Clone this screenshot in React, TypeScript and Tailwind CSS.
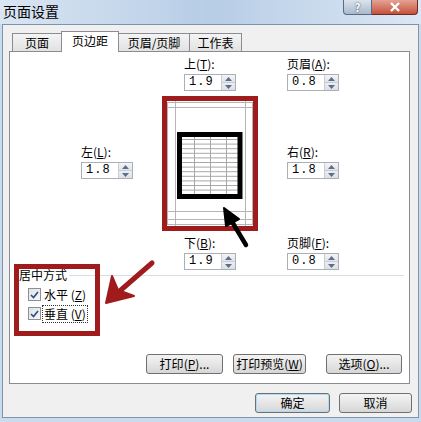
import React from 'react';

const cjk = "font-['SimSun','Noto_Sans_CJK_SC',sans-serif]";

function Key({ k }: { k: string }) {
  return (
    <>
      (<span className="underline underline-offset-1">{k}</span>)
    </>
  );
}

function Spin({ value }: { value: string }) {
  return (
    <div className="flex h-[17px] w-[52px] border border-[#abb0b8] bg-white">
      <div className="flex-1 pl-[4px] text-[12px] leading-[15px] tracking-[1px] font-['Liberation_Mono',monospace] text-black">
        {value}
      </div>
      <div className="flex w-[14px] flex-col border-l border-[#c9ccd2]">
        <div className="flex flex-1 items-center justify-center bg-gradient-to-b from-[#f4f4f4] to-[#e2e4e8] border-b border-[#c9ccd2]">
          <svg width="7" height="4" viewBox="0 0 7 4">
            <path d="M0 4 L3.5 0 L7 4 Z" fill="#5b6e8f" />
          </svg>
        </div>
        <div className="flex flex-1 items-center justify-center bg-gradient-to-b from-[#eceef1] to-[#dcdfe4]">
          <svg width="7" height="4" viewBox="0 0 7 4">
            <path d="M0 0 L3.5 4 L7 0 Z" fill="#5b6e8f" />
          </svg>
        </div>
      </div>
    </div>
  );
}

function Field({ label, k, value, className }: { label: string; k: string; value: string; className?: string }) {
  return (
    <div className={className}>
      <div className="h-[16px] text-[12px] leading-[16px] text-black whitespace-nowrap">
        {label}
        <Key k={k} />:
      </div>
      <div className="mt-[2px]">
        <Spin value={value} />
      </div>
    </div>
  );
}

function Check({ label, k, focus }: { label: string; k: string; focus?: boolean }) {
  return (
    <div className="flex items-center h-[13px]">
      <div className="flex h-[13px] w-[13px] items-center justify-center border border-[#8e8f8f] bg-gradient-to-br from-[#dfe3ea] to-[#f6f7f9]">
        <svg width="9" height="8" viewBox="0 0 9 8">
          <path d="M1 4 L3.5 6.5 L8 1" stroke="#2e4a86" strokeWidth="1.6" fill="none" />
        </svg>
      </div>
      <div
        className={
          'ml-[2px] px-[1px] text-[12px] leading-[16px] text-black whitespace-nowrap ' +
          (focus ? 'outline-1 outline-dotted outline-[#333]' : '')
        }
      >
        {label} <Key k={k} />
      </div>
    </div>
  );
}

function Button({ children, className }: { children: React.ReactNode; className?: string }) {
  return (
    <div
      className={
        'flex h-[20px] items-center justify-center rounded-[3px] border border-[#707070] bg-gradient-to-b from-[#f3f3f3] via-[#e6e6e6] to-[#d6d6d6] text-[12px] text-black ' +
        (className || '')
      }
    >
      {children}
    </div>
  );
}

function Preview() {
  const rows = Array.from({ length: 12 }, (_, i) => 140.5 + i * 4.6);
  return (
    <div className="h-[135px] w-[96px] border-[5px] border-[#a01c1c] bg-white">
      <svg width="86" height="125" viewBox="167 102 86 125">
        <g stroke="#b5b5b5" strokeWidth="1" fill="none">
          <rect x="167.5" y="103.5" width="85" height="122" />
          <line x1="175.5" y1="102" x2="175.5" y2="227" />
          <line x1="245.5" y1="102" x2="245.5" y2="227" />
          <line x1="167" y1="108.5" x2="253" y2="108.5" />
          <line x1="167" y1="212.5" x2="253" y2="212.5" />
          <line x1="167" y1="220.5" x2="253" y2="220.5" />
        </g>
        <g stroke="#a8a8a8" strokeWidth="1">
          {rows.map((y) => (
            <line key={y} x1="181" y1={y} x2="238" y2={y} />
          ))}
          <line x1="194.5" y1="137" x2="194.5" y2="196" />
          <line x1="210.5" y1="137" x2="210.5" y2="196" />
          <line x1="226.5" y1="137" x2="226.5" y2="196" />
        </g>
        <rect x="179.5" y="135.5" width="60.5" height="62" stroke="#000" strokeWidth="5" fill="none" />
      </svg>
    </div>
  );
}

export default function App() {
  return (
    <div className={'relative h-[422px] w-[421px] overflow-hidden bg-[#c9dbee] ' + cjk}>
      {/* title bar */}
      <div className="flex h-[24px] bg-gradient-to-r from-[#d9e5f2] via-[#b7cde6] to-[#dbe7f4]">
        <div className="pl-[3px] pt-[2px] text-[14px] leading-[18px] text-black">页面设置</div>
        <div className="ml-auto mr-[3px] flex h-[15px]">
          <div className="flex w-[29px] items-center justify-center rounded-bl-[4px] border border-t-0 border-[#5a6b80] bg-gradient-to-b from-[#dbe4ee] to-[#a9b9cc] text-[11px] leading-none text-white font-bold [text-shadow:0_0_2px_#334]">
            ?
          </div>
          <div className="flex w-[46px] items-center justify-center rounded-br-[4px] border border-l-0 border-t-0 border-[#6b2a22] bg-gradient-to-b from-[#e4a294] to-[#c3503b]">
            <svg width="12" height="10" viewBox="0 0 12 10">
              <path d="M2 1 L10 9 M10 1 L2 9" stroke="#fff" strokeWidth="2.4" />
            </svg>
          </div>
        </div>
      </div>

      {/* dialog body */}
      <div className="ml-[2px] flex h-[394px] w-[417px] flex-col border border-[#7f93ab] bg-[#f0f0f0] pl-[6px]">
        {/* tabs */}
        <div className="flex h-[26px] items-end pl-[3px]">
          <div className="h-[18px] w-[50px] border border-b-0 border-[#898c95] bg-gradient-to-b from-[#f4f4f4] to-[#e2e2e2] text-center text-[12px] leading-[17px]">
            页面
          </div>
          <div className="relative z-10 -mb-px -ml-px h-[21px] w-[58px] border border-b-0 border-[#898c95] bg-white text-center text-[12px] leading-[18px]">
            页边距
          </div>
          <div className="-ml-px h-[18px] w-[72px] border border-b-0 border-[#898c95] bg-gradient-to-b from-[#f4f4f4] to-[#e2e2e2] text-center text-[12px] leading-[17px]">
            页眉/页脚
          </div>
          <div className="-ml-px h-[18px] w-[53px] border border-b-0 border-[#898c95] bg-gradient-to-b from-[#f4f4f4] to-[#e2e2e2] text-center text-[12px] leading-[17px]">
            工作表
          </div>
        </div>

        {/* panel */}
        <div className="flex h-[333px] w-[401px] flex-col border border-[#898c95] bg-white">
          <div className="ml-[71px] mt-[4px] grid grid-cols-[52px_96px_52px] grid-rows-[36px_139px_34px] gap-x-[29px]">
            <div />
            <Field className="ml-[22px]" label="上" k="T" value="1.9" />
            <Field label="页眉" k="A" value="0.8" />

            <Field className="self-center" label="左" k="L" value="1.8" />
            <div className="mt-[4px]">
              <Preview />
            </div>
            <Field className="self-center" label="右" k="R" value="1.8" />

            <div />
            <Field className="ml-[22px] mt-[4px]" label="下" k="B" value="1.9" />
            <Field className="mt-[4px]" label="页脚" k="F" value="0.8" />
          </div>

          {/* 居中方式 group */}
          <div className="mt-[2px] flex items-center pl-[9px] pr-[5px]">
            <div className="text-[12px] leading-[16px]">居中方式</div>
            <div className="ml-[2px] h-px flex-1 bg-[#d5dfe5]" />
          </div>
          <div className="ml-[18px] mt-[5px] flex flex-col gap-[6px]">
            <Check label="水平" k="Z" />
            <Check label="垂直" k="V" focus />
          </div>

          <div className="mt-auto mb-[9px] mr-[7px] flex justify-end">
            <Button className="w-[77px]">
              打印<Key k="P" />...
            </Button>
            <Button className="ml-[10px] w-[73px]">
              打印预览<Key k="W" />
            </Button>
            <Button className="ml-[20px] w-[76px]">
              选项<Key k="O" />...
            </Button>
          </div>
        </div>

        {/* OK / Cancel */}
        <div className="mr-[6px] mt-[9px] flex justify-end">
          <Button className="w-[75px] border-[#3c7fb1] shadow-[inset_0_0_0_1px_#a9dcf6] from-[#eaf6fd] via-[#d9f0fc] to-[#bee6fd]">确定</Button>
          <Button className="ml-[9px] w-[73px]">取消</Button>
        </div>
      </div>

      {/* annotations */}
      <div className="pointer-events-none absolute left-[14px] top-[264px] h-[72px] w-[86px] border-[5px] border-[#a01c1c]" />
      <svg className="pointer-events-none absolute left-0 top-0" width="421" height="422" viewBox="0 0 421 422">
        <path d="M246 245 L231 220" stroke="#000" strokeWidth="4.5" strokeLinecap="round" />
        <path d="M224 208 L239 219 L226 226 Z" fill="#000" stroke="#000" strokeWidth="2" strokeLinejoin="round" />
        <path d="M152 263 L114 296" stroke="#a01c1c" strokeWidth="5" strokeLinecap="round" />
        <path d="M106 303 L112 276 L118 290 L134 296 Z" fill="#a01c1c" stroke="#a01c1c" strokeWidth="2" strokeLinejoin="round" />
      </svg>
    </div>
  );
}
